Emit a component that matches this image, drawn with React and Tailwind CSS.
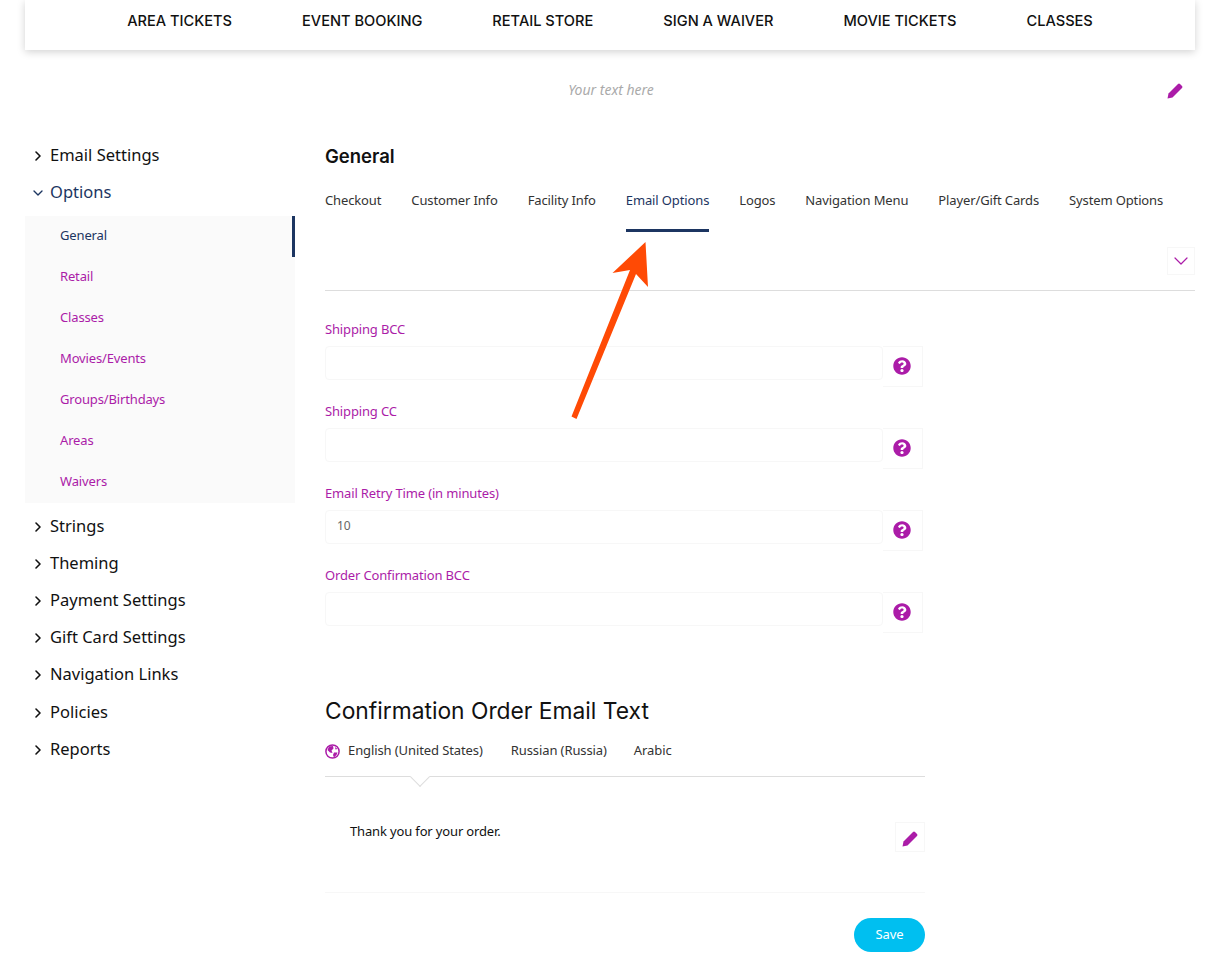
import React from "react";
import { ChevronRight, ChevronDown } from "lucide-react";
import { FaQuestionCircle } from "react-icons/fa";

const navLinks = ["AREA TICKETS", "EVENT BOOKING", "RETAIL STORE", "SIGN A WAIVER", "MOVIE TICKETS", "CLASSES"];
const tabs = ["Checkout", "Customer Info", "Facility Info", "Email Options", "Logos", "Navigation Menu", "Player/Gift Cards", "System Options"];
const subItems = ["General", "Retail", "Classes", "Movies/Events", "Groups/Birthdays", "Areas", "Waivers"];
const lowerItems = ["Strings", "Theming", "Payment Settings", "Gift Card Settings", "Navigation Links", "Policies", "Reports"];
const fields = [
  { label: "Shipping BCC", value: "" },
  { label: "Shipping CC", value: "" },
  { label: "Email Retry Time (in minutes)", value: "10" },
  { label: "Order Confirmation BCC", value: "" },
];

const Pencil = ({ className = "" }) => (
  <svg width="16" height="16" viewBox="0 0 16 16" className={className} fill="currentColor">
    <path d="M0.5 15.5 L1.5 10.5 L11 1 Q12 0 13 1 L15 3 Q16 4 15 5 L5.5 14.5 Z" />
  </svg>
);

const Globe = ({ className = "" }) => (
  <svg width="15" height="15" viewBox="0 0 15 15" className={className} fill="currentColor">
    <circle cx="7.5" cy="7.5" r="6.6" fill="none" stroke="currentColor" strokeWidth="1.5" />
    <path d="M4 2.5 L8 2 L8.5 4.5 L6.5 6.5 L7.5 9 L5 8.5 L2.5 6 Z" />
    <path d="M9 8.5 L12.5 8.5 L11.5 11 L9 13.5 L8 11 Z" />
    <path d="M10 3 L12.5 5 L10.5 5.5 Z" />
  </svg>
);

const SideItem = ({ label, open, className = "" }) => (
  <div className={`flex h-[37px] items-center text-[16.5px] ${open ? "text-[#1c3561]" : "text-[#111]"} ${className}`}>
    <span className="flex w-[25px] justify-start pl-[5px]">
      {open ? <ChevronDown size={16} strokeWidth={2} /> : <ChevronRight size={16} strokeWidth={2.4} />}
    </span>
    {label}
  </div>
);

const Field = ({ label, value }) => (
  <div>
    <div className="h-[18px] text-[13px] leading-[18px] text-[#ab1ca8]">{label}</div>
    <div className="mt-2 mb-[15px] flex w-[598px] items-start">
      <input
        readOnly
        value={value}
        className="h-[34px] flex-1 rounded-sm border border-[#f7f7f7] bg-white pr-3 pb-[3px] pl-[11px] text-[12px] text-[#666] outline-none"
      />
      <div className="flex h-[41px] w-[40px] items-center justify-center border border-l-0 border-[#f7f7f7] pr-[2px] pb-px text-[#ab1ca8]">
        <FaQuestionCircle size={18} />
      </div>
    </div>
  </div>
);

export default function App() {
  return (
    <div className="relative h-[964px] w-full overflow-hidden bg-white px-[25px] font-['Noto_Sans',sans-serif] tracking-[-0.15px] text-[#222]">
      <header className="flex h-[50px] items-start justify-center gap-[70px] bg-white pt-[11px] tracking-normal shadow-[0_2px_8px_rgba(0,0,0,0.18)]">
        {navLinks.map((link) => (
          <a key={link} className="font-['Inter',sans-serif] text-[14.6px] leading-5 font-medium text-[#111]">
            {link}
          </a>
        ))}
      </header>

      <div className="relative flex h-[87px] items-center justify-center pb-[8px] pl-[2px] text-[14px] tracking-normal text-[#aaa] italic">
        Your text here
        <Pencil className="absolute top-[33px] right-[12px] text-[#ab1ca8]" />
      </div>

      <div className="flex">
        <aside className="w-[270px] shrink-0 tracking-normal">
          <SideItem label="Email Settings" />
          <SideItem label="Options" open />
          <div className="mt-[5px] mb-1 bg-[#fafafa] text-[13px] tracking-[-0.15px]">
            {subItems.map((item, i) => (
              <div
                key={item}
                className={`flex h-[41px] items-center pb-[2px] pl-[35px] ${
                  i === 0 ? "border-r-[3px] border-[#1c3561] text-[#1c3561]" : "text-[#ab1ca8]"
                }`}
              >
                {item}
              </div>
            ))}
          </div>
          {lowerItems.map((item) => (
            <SideItem key={item} label={item} className={item === "Policies" ? "mt-px pt-[2px]" : "pt-[2px]"} />
          ))}
        </aside>

        <main className="ml-[30px] flex-1">
          <h2 className="flex h-10 items-center font-['Inter',sans-serif] text-[18.5px] font-semibold tracking-normal text-[#111]">General</h2>

          <div className="flex gap-[30px] text-[13px] tracking-[-0.13px]">
            {tabs.map((tab) => (
              <div
                key={tab}
                className={`h-[55px] pt-[14px] leading-[18px] ${
                  tab === "Email Options" ? "border-b-[3px] border-[#1c3561] text-[#1c3561]" : "text-[#333]"
                }`}
              >
                {tab}
              </div>
            ))}
          </div>

          <div className="mt-[15px] mb-[15px] flex justify-end">
            <div className="flex h-[28px] w-[28px] items-center justify-center border border-[#f7f7f7] text-[#ab1ca8]">
              <ChevronDown size={24} strokeWidth={1.2} />
            </div>
          </div>

          <div className="border-t border-[#ddd] pt-[29px]">
            {fields.map((f) => (
              <Field key={f.label} label={f.label} value={f.value} />
            ))}
          </div>

          <h2 className="mt-[61px] flex h-[34px] items-center font-['Inter',sans-serif] text-[22.8px] font-normal tracking-normal text-[#111]">
            Confirmation Order Email Text
          </h2>

          <div className="mt-[11px] flex h-[24px] items-center text-[13px] tracking-[-0.1px] text-[#333]">
            <Globe className="mr-2 text-[#ab1ca8]" />
            <span>English (United States)</span>
            <span className="ml-7">Russian (Russia)</span>
            <span className="ml-[27px]">Arabic</span>
          </div>

          <div className="relative mt-[13px] w-[600px] border-t border-[#ddd]">
            <span className="absolute top-[-7px] left-[88px] h-[14px] w-[14px] rotate-45 border-r border-b border-[#ddd] bg-white" />
            <div className="flex h-[116px] items-start justify-between border-b border-[#f7f7f7] pt-[45px] pl-[25px]">
              <p className="text-[13px] leading-[18px] text-[#111]">Thank you for your order.</p>
              <div className="flex h-[30px] w-[30px] items-center justify-center border border-[#f7f7f7] pt-[3px] text-[#ab1ca8]">
                <Pencil />
              </div>
            </div>
            <div className="mt-[25px] flex justify-end">
              <button className="h-[34px] w-[71px] rounded-full bg-[#00bff0] text-[13px] text-white">Save</button>
            </div>
          </div>
        </main>
      </div>

      {/* annotation arrow */}
      <svg className="pointer-events-none absolute top-0 left-0" width="1220" height="964">
        <polygon
          points="571.5,416.5 576.5,419 636,274 648,287 645.5,242 612.5,273 630,270"
          fill="#ff4a05"
        />
      </svg>
    </div>
  );
}
